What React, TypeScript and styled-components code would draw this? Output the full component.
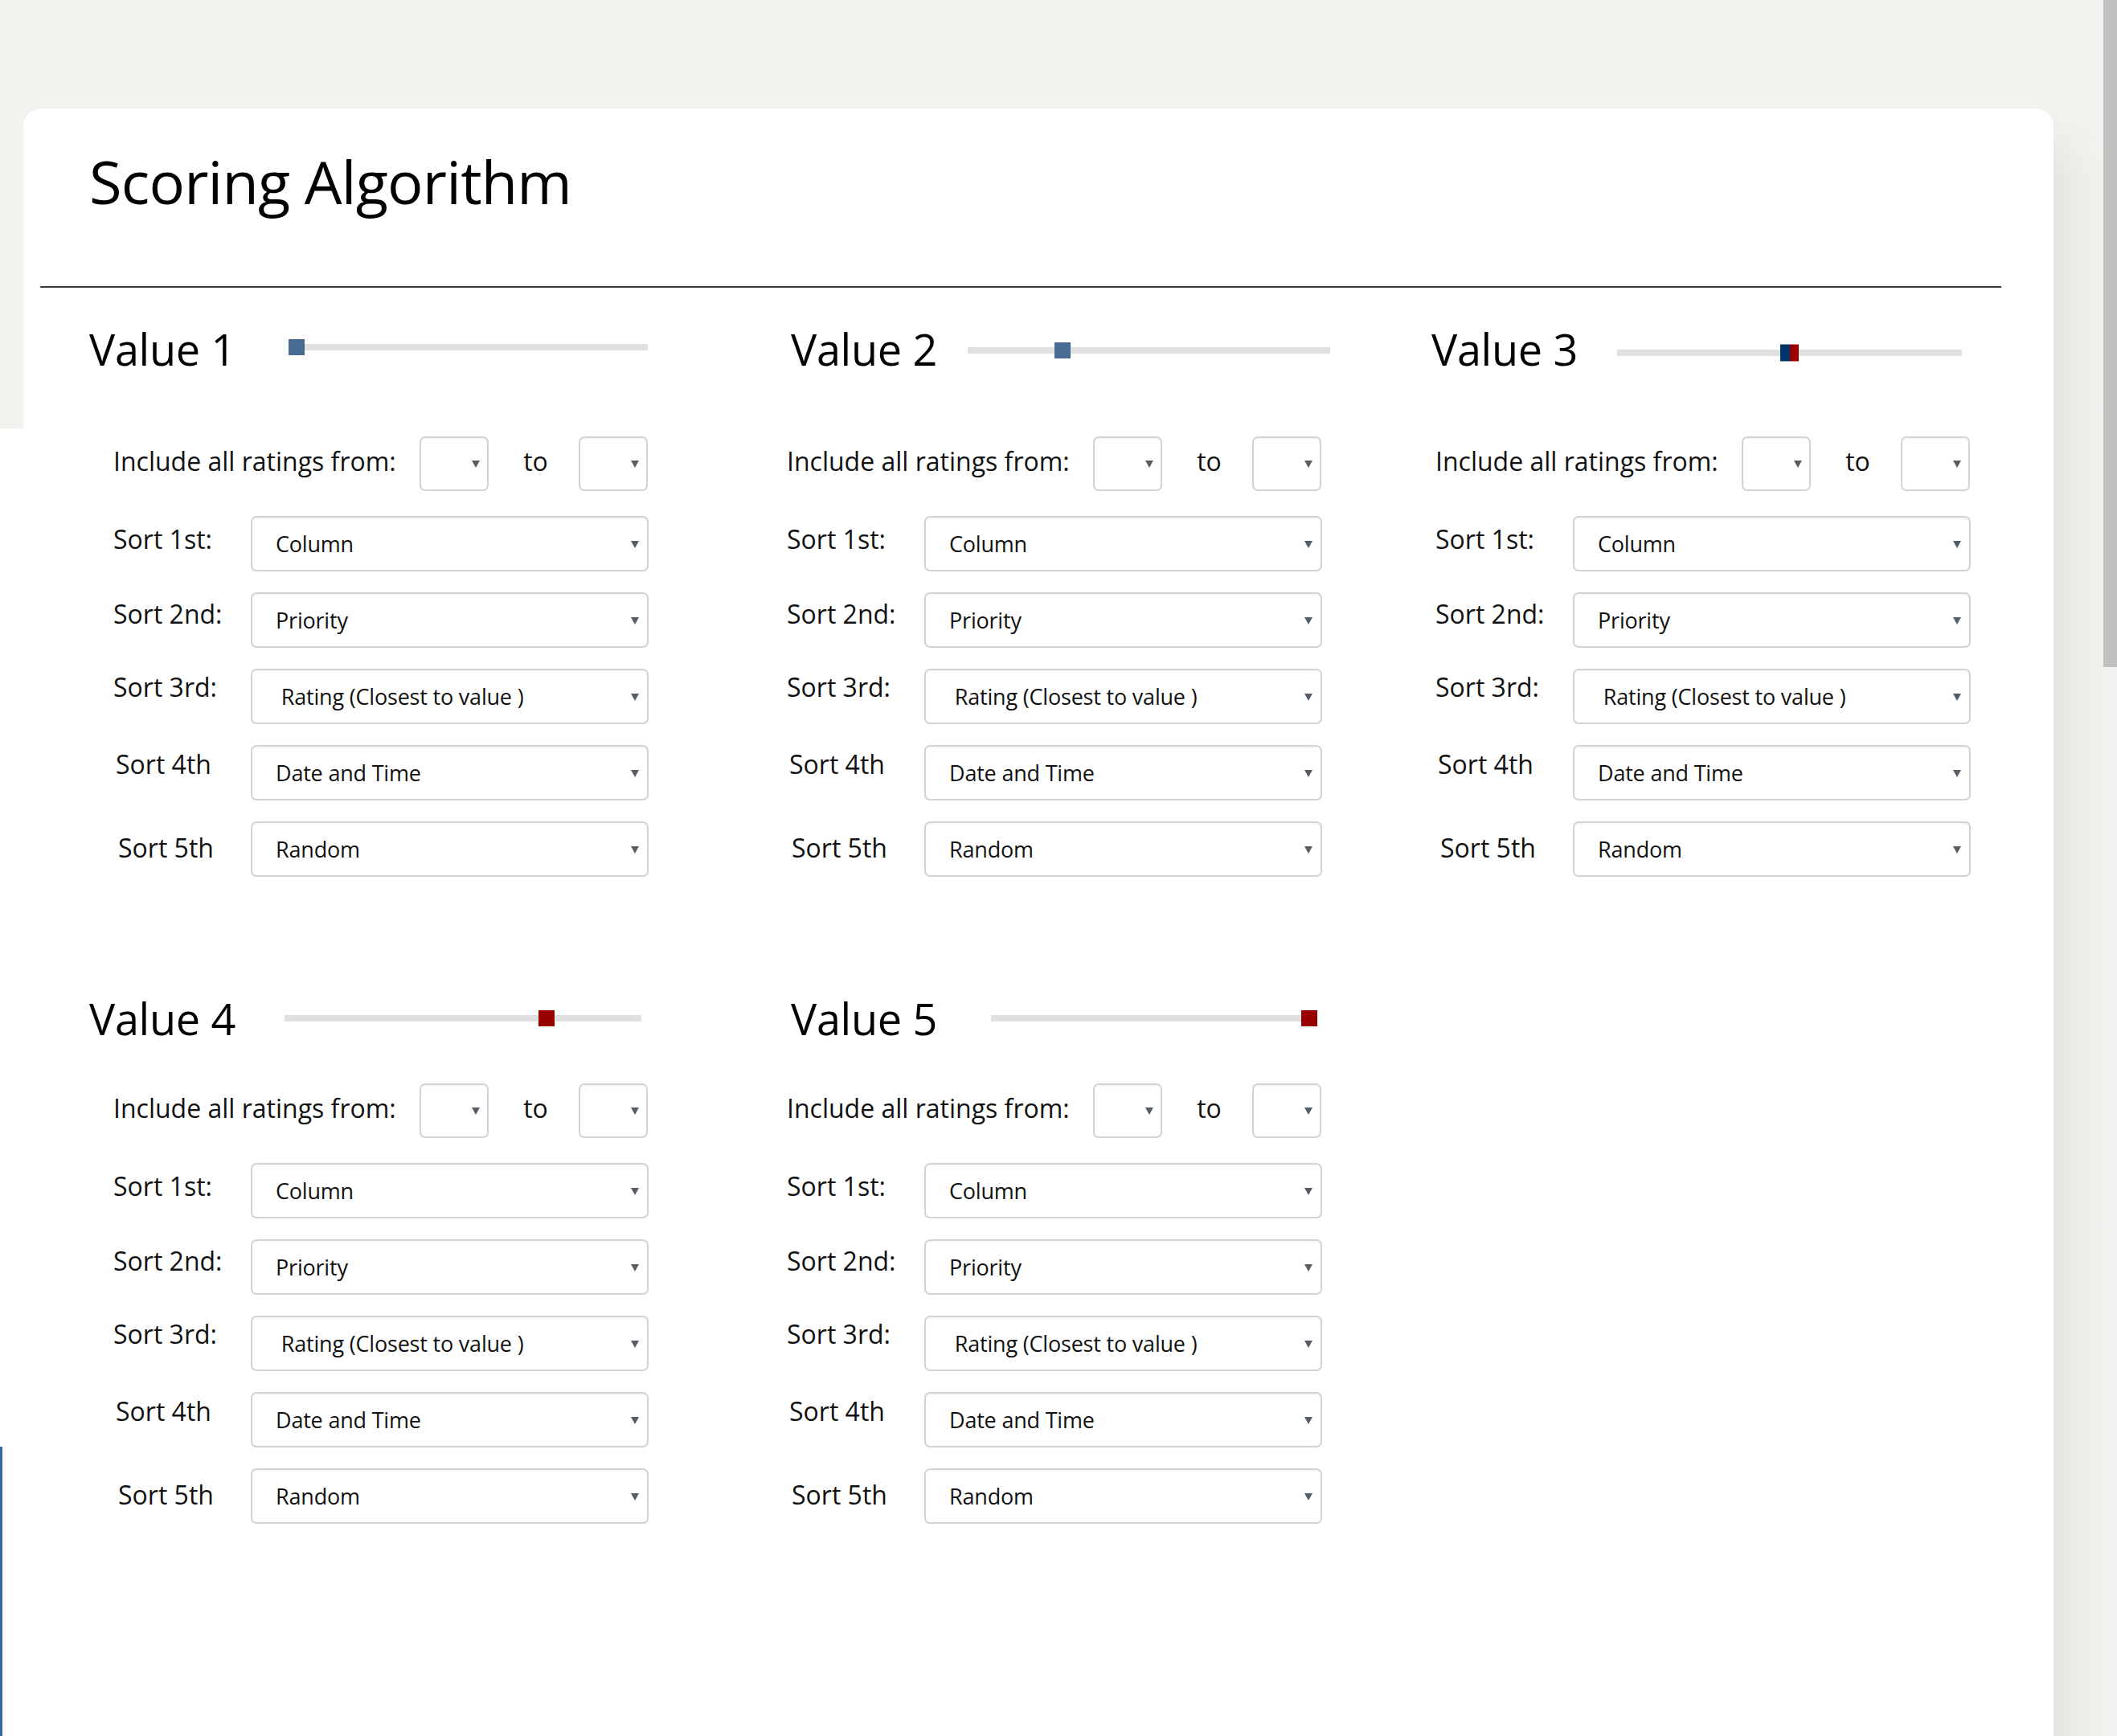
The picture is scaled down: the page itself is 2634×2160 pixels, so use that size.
import React from "react";
import styled, { createGlobalStyle } from "styled-components";

const GlobalStyle = createGlobalStyle`
  html, body { margin: 0; padding: 0; }
  body {
    background: #f3f2ee;
    font-family: "Open Sans", "Noto Sans", sans-serif;
    color: #000;
    overflow: hidden;
  }
  * { box-sizing: border-box; }
`;

const Screen = styled.div`
  display: flex;
  width: 2634px;
  height: 2160px;
  overflow: hidden;
  background: #f3f2ee;
`;

const Viewport = styled.div`
  flex: 1;
  display: flex;
  align-items: flex-start;
  min-width: 0;
`;

const Gutter = styled.div`
  position: relative;
  width: 29px;
  flex: none;
  align-self: stretch;
  background: linear-gradient(to bottom, #f3f2ee 533px, #ffffff 533px);
  &::after {
    content: "";
    position: absolute;
    left: 0;
    top: 1800px;
    bottom: 0;
    width: 3px;
    background: #36699d;
  }
`;

const Card = styled.main`
  width: 2526px;
  flex: none;
  margin-top: 135px;
  min-height: 2025px;
  background: #ffffff;
  border-radius: 22px 22px 0 0;
`;

const CardShadow = styled.div`
  width: 62px;
  flex: none;
  align-self: stretch;
  margin-top: 140px;
  background: linear-gradient(
    to right,
    rgba(70, 60, 40, 0.075),
    rgba(70, 60, 40, 0.03) 45%,
    rgba(70, 60, 40, 0.004)
  );
  -webkit-mask-image: linear-gradient(to bottom, transparent, #000 80px);
  mask-image: linear-gradient(to bottom, transparent, #000 80px);
`;

const Scrollbar = styled.div`
  width: 17px;
  flex: none;
  display: flex;
  flex-direction: column;
  background: #f1f1f1;
`;

const ScrollThumb = styled.div`
  height: 830px;
  background: #c1c1c1;
`;

const Title = styled.h1`
  margin: 54px 0 0 82px;
  font-size: 74px;
  font-weight: 400;
  line-height: 1;
  letter-spacing: -0.8px;
  color: #000;
`;

const Divider = styled.hr`
  margin: 93px 0 0 21px;
  width: 2440px;
  height: 2px;
  border: 0;
  background: #3a3a3a;
`;

const Section = styled.section<{ $top: number }>`
  display: grid;
  grid-template-columns: 838px 807px 1fr;
  padding-left: 82px;
  margin-top: ${(p) => p.$top}px;
`;

const Column = styled.div`
  display: flex;
  flex-direction: column;
`;

const HeadingRow = styled.div<{ $trackStart: number; $trackWidth: number }>`
  display: grid;
  grid-template-columns: ${(p) => p.$trackStart}px ${(p) => p.$trackWidth}px;
  align-items: center;
  height: 60px;
`;

const Heading = styled.h2<{ $inset: number }>`
  margin: 0;
  padding-left: ${(p) => p.$inset}px;
  font-size: 54px;
  font-weight: 400;
  line-height: 1;
  letter-spacing: -0.3px;
  color: #000;
  white-space: nowrap;
`;

const Track = styled.div<{ $drop: number }>`
  position: relative;
  height: 8px;
  background: #e0e0e0;
  margin-top: ${(p) => p.$drop * 2}px;
`;

type ThumbKind = "blue" | "red" | "split";

const thumbBg: Record<ThumbKind, string> = {
  blue: "#476b93",
  red: "#990000",
  split: "linear-gradient(to right, #003366 50%, #990000 50%)",
};

const Thumb = styled.div<{ $kind: ThumbKind }>`
  position: absolute;
  top: 50%;
  width: ${(p) => (p.$kind === "split" ? 23 : 20)}px;
  height: ${(p) => (p.$kind === "split" ? 21 : 20)}px;
  transform: translateY(-50%);
  background: ${(p) => thumbBg[p.$kind]};
`;

const Form = styled.div<{ $gap: number }>`
  display: flex;
  flex-direction: column;
  margin-top: ${(p) => p.$gap}px;
  padding-left: 30px;
`;

const RangeRow = styled.div`
  display: flex;
  align-items: center;
  height: 68px;
`;

const FieldLabel = styled.span<{ $lift: number; $indent?: number }>`
  font-size: 32px;
  line-height: 1.2;
  color: #111;
  white-space: nowrap;
  padding-bottom: ${(p) => p.$lift * 2}px;
  padding-left: ${(p) => p.$indent ?? 0}px;
`;

const RangeLabel = styled(FieldLabel)`
  width: 381px;
`;

const ToLabel = styled(FieldLabel)`
  width: 112px;
  text-align: center;
  padding-left: 5px;
`;

const SortList = styled.div`
  display: grid;
  grid-template-columns: 171px 495px;
  row-gap: 26px;
  align-items: center;
  margin-top: 31px;
`;

const SelectBox = styled.div<{ $small?: boolean }>`
  display: flex;
  align-items: center;
  justify-content: ${(p) => (p.$small ? "flex-end" : "space-between")};
  width: ${(p) => (p.$small ? 86 : 495)}px;
  height: ${(p) => (p.$small ? 68 : 69)}px;
  padding: ${(p) => (p.$small ? "0 9px 0 0" : "0 10px 0 29px")};
  border: 2px solid #cfd4da;
  border-radius: 7px;
  background: #ffffff;
  box-shadow: inset 0 2px 2px rgba(0, 0, 0, 0.035);
  font-size: 27px;
  letter-spacing: -0.2px;
  color: #111;
  white-space: pre;
`;

const Caret = () => (
  <svg width="10" height="10" viewBox="0 0 10 10" aria-hidden="true">
    <polygon points="0,1 10,1 5,10" fill="#555d66" />
  </svg>
);

type Slider = {
  name: string;
  inset: number;
  trackStart: number;
  trackWidth: number;
  thumbLeft: number;
  drop: number;
  kind: ThumbKind;
};

const sortRows = [
  { label: "Sort 1st:", value: "Column", lift: 5, indent: 0 },
  { label: "Sort 2nd:", value: "Priority", lift: 7, indent: 0 },
  { label: "Sort 3rd:", value: " Rating (Closest to value )", lift: 11, indent: 0 },
  { label: "Sort 4th", value: "Date and Time", lift: 10, indent: 3 },
  { label: "Sort 5th", value: "Random", lift: 1, indent: 6 },
];

const ValueBlock = ({ s, formGap }: { s: Slider; formGap: number }) => (
  <Column>
    <HeadingRow $trackStart={s.trackStart} $trackWidth={s.trackWidth}>
      <Heading $inset={s.inset}>{s.name}</Heading>
      <Track $drop={s.drop}>
        <Thumb $kind={s.kind} style={{ left: s.thumbLeft }} />
      </Track>
    </HeadingRow>
    <Form $gap={formGap}>
      <RangeRow>
        <RangeLabel $lift={3}>Include all ratings from:</RangeLabel>
        <SelectBox $small>
          <Caret />
        </SelectBox>
        <ToLabel $lift={3}>to</ToLabel>
        <SelectBox $small>
          <Caret />
        </SelectBox>
      </RangeRow>
      <SortList>
        {sortRows.map((r) => (
          <React.Fragment key={r.label}>
            <FieldLabel $lift={r.lift} $indent={r.indent}>
              {r.label}
            </FieldLabel>
            <SelectBox>
              <span>{r.value}</span>
              <Caret />
            </SelectBox>
          </React.Fragment>
        ))}
      </SortList>
    </Form>
  </Column>
);

const firstRow: Slider[] = [
  { name: "Value 1", inset: 0, trackStart: 249, trackWidth: 446, thumbLeft: -1, drop: -2, kind: "blue" },
  { name: "Value 2", inset: 35, trackStart: 255, trackWidth: 451, thumbLeft: 108, drop: 2, kind: "blue" },
  { name: "Value 3", inset: 25, trackStart: 256, trackWidth: 429, thumbLeft: 203, drop: 5, kind: "split" },
];

const secondRow: Slider[] = [
  { name: "Value 4", inset: 0, trackStart: 243, trackWidth: 444, thumbLeft: 316, drop: 0, kind: "red" },
  { name: "Value 5", inset: 35, trackStart: 284, trackWidth: 405, thumbLeft: 386, drop: 0, kind: "red" },
];

export default function App() {
  return (
    <>
      <GlobalStyle />
      <Screen>
        <Viewport>
          <Gutter />
          <Card>
            <Title>Scoring Algorithm</Title>
            <Divider />
            <Section $top={46}>
              {firstRow.map((s) => (
                <ValueBlock key={s.name} s={s} formGap={79} />
              ))}
            </Section>
            <Section $top={146}>
              {secondRow.map((s) => (
                <ValueBlock key={s.name} s={s} formGap={51} />
              ))}
            </Section>
          </Card>
          <CardShadow />
        </Viewport>
        <Scrollbar>
          <ScrollThumb />
        </Scrollbar>
      </Screen>
    </>
  );
}
